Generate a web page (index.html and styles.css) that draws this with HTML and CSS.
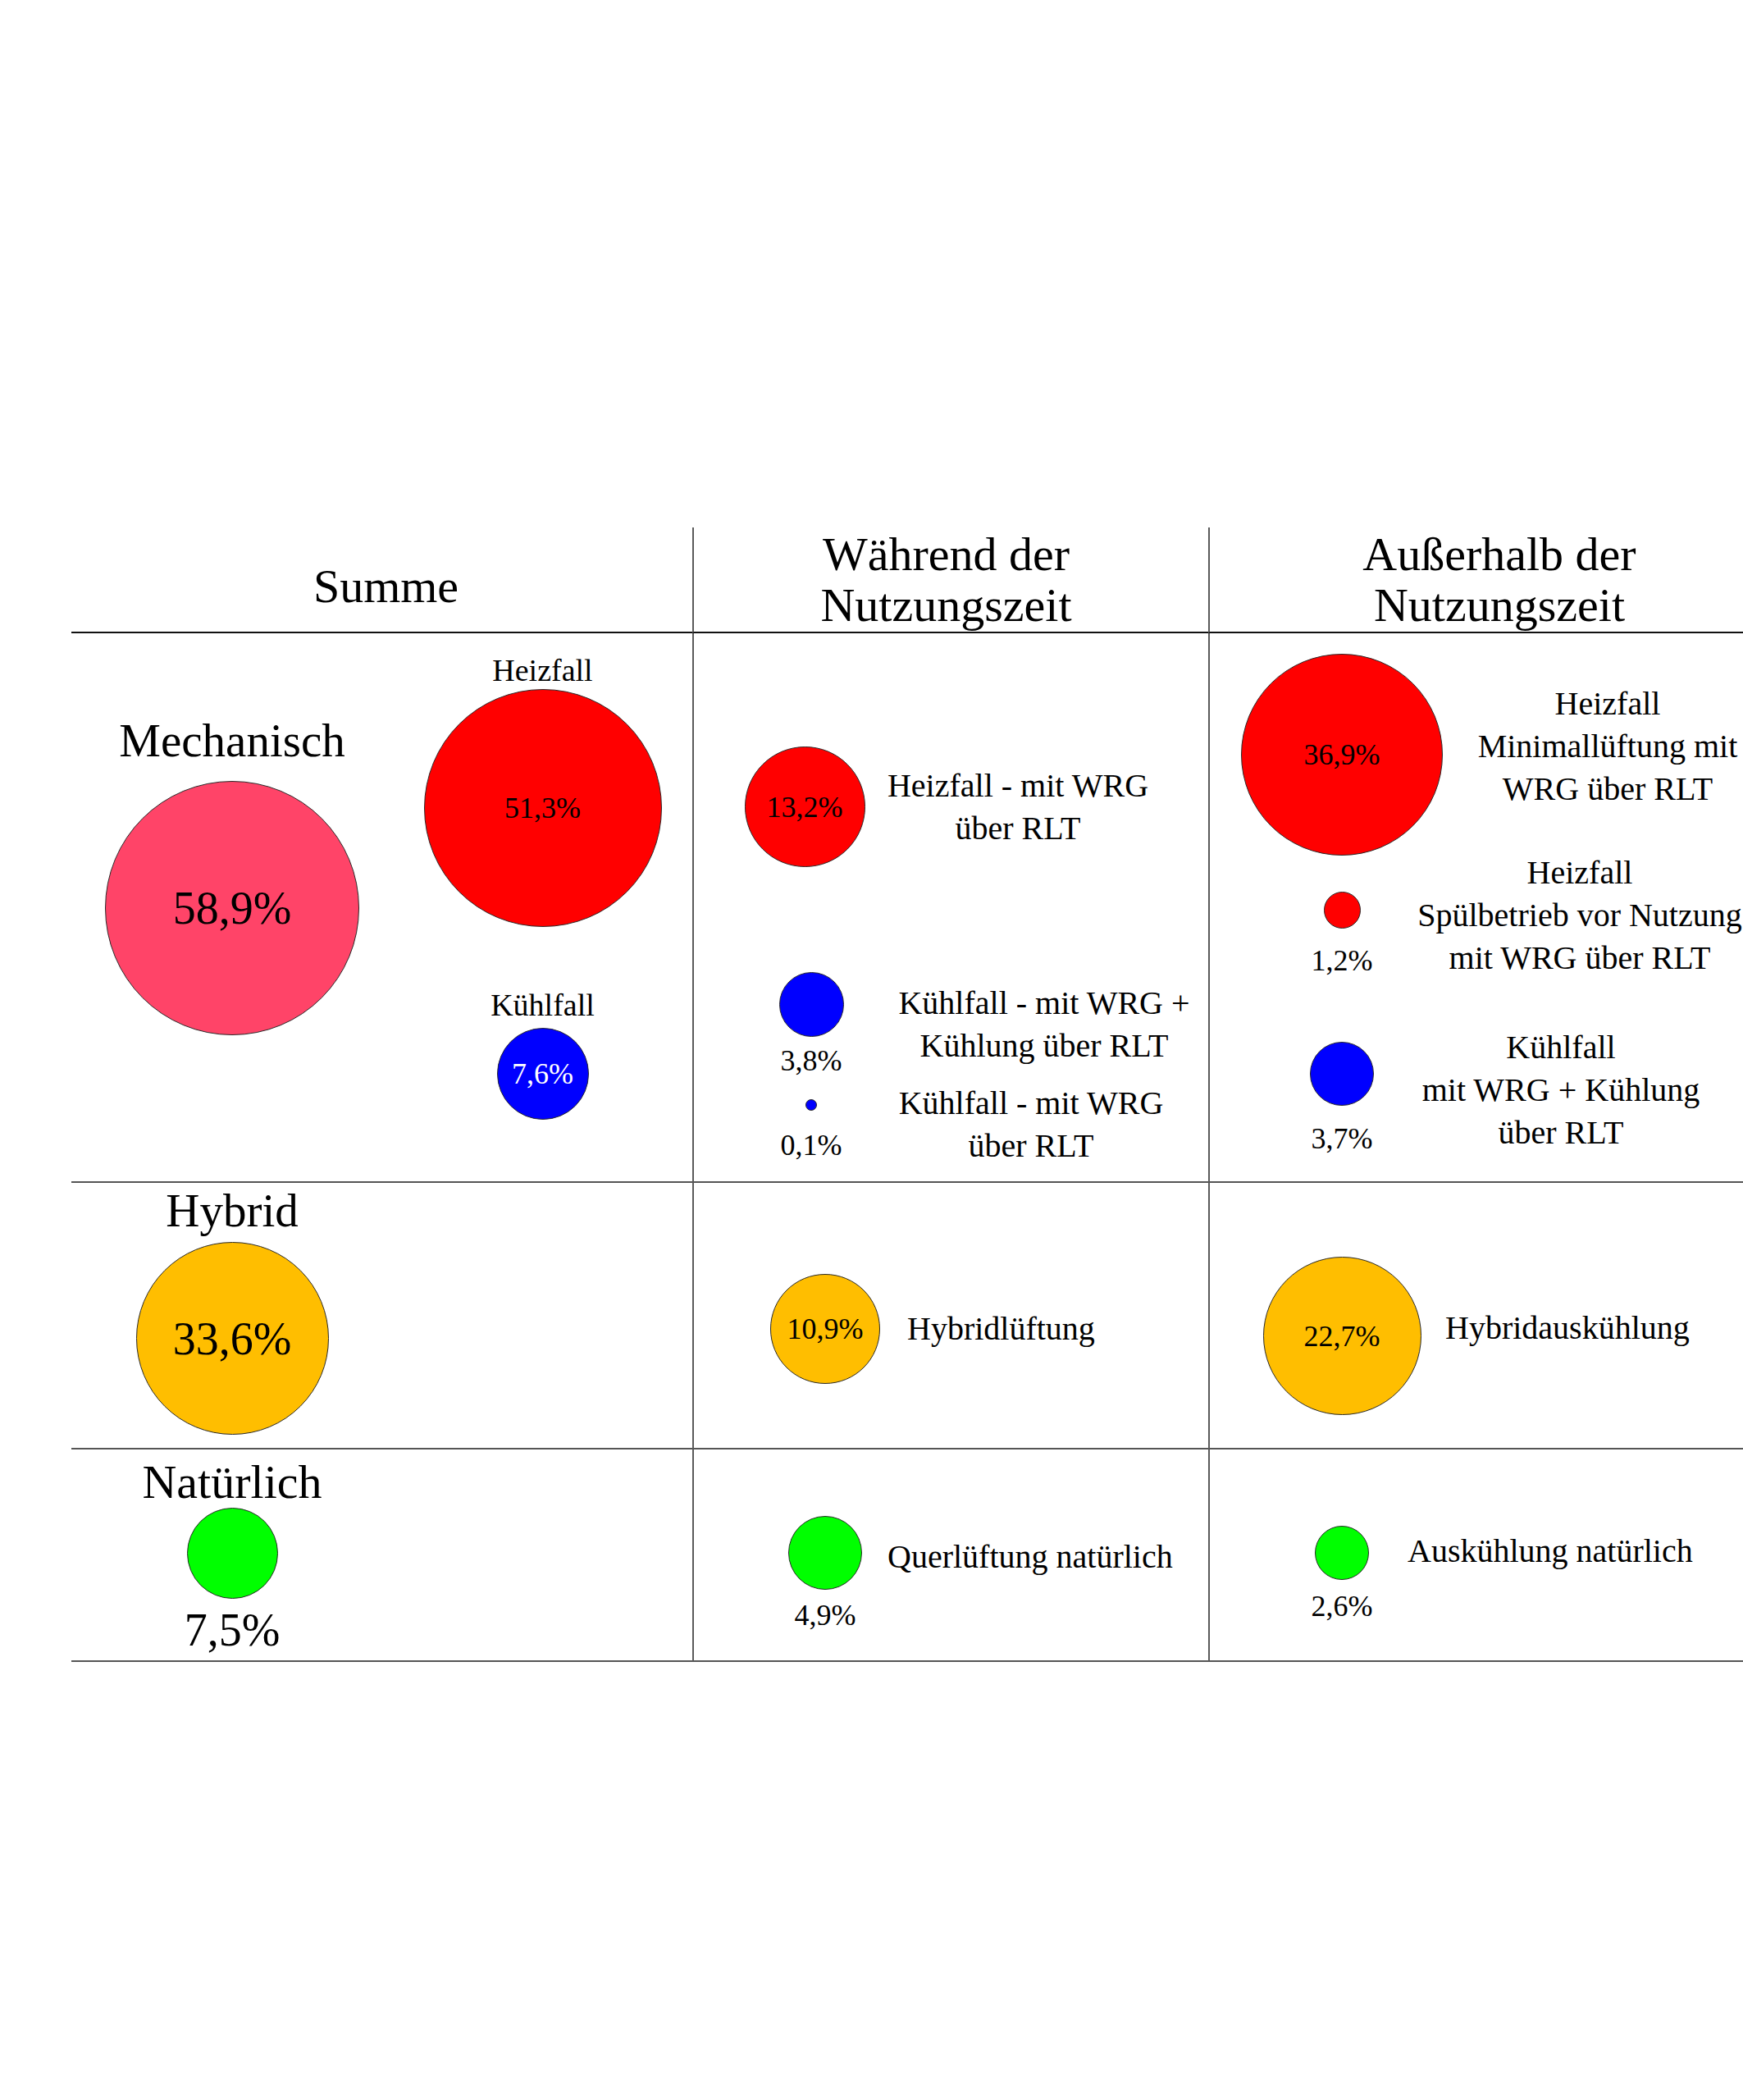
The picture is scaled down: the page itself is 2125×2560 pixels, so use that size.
FILE: index.html
```html
<!DOCTYPE html>
<html lang="de">
<head>
<meta charset="utf-8">
<title>Lüftungsarten – Anteile</title>
<link rel="stylesheet" href="styles.css">
</head>
<body>
<div class="chart">
  <div class="cell head sum"><div>Summe</div></div>
  <div class="cell head mid"><div>Während der<br>Nutzungszeit</div></div>
  <div class="cell head right"><div>Außerhalb der<br>Nutzungszeit</div></div>

  <!-- Mechanisch -->
  <div class="cell sum row-mech">
    <div class="group main mech">
      <div class="cat">Mechanisch</div>
      <div class="bubble pink b-mech" style="--d:310px"><span class="pct-lg">58,9%</span></div>
    </div>
    <div class="group sub">
      <div class="case">Heizfall</div>
      <div class="bubble red" style="--d:290px"><span class="pct">51,3%</span></div>
      <div class="case kuehl">Kühlfall</div>
      <div class="bubble blue b-kuehl" style="--d:112px"><span class="pct light">7,6%</span></div>
    </div>
  </div>
  <div class="cell mid list r1-mid">
    <div class="item m1a">
      <div class="mark"><div class="bubble red" style="--d:147px"><span class="pct">13,2%</span></div></div>
      <div class="desc">Heizfall - mit WRG<br>über RLT</div>
    </div>
    <div class="item m1b">
      <div class="mark">
        <div class="bubble blue" style="--d:79px"></div>
        <div class="label">3,8%</div>
      </div>
      <div class="desc">Kühlfall - mit WRG +<br>Kühlung über RLT</div>
    </div>
    <div class="item m1c">
      <div class="mark">
        <div class="bubble blue" style="--d:14px"></div>
        <div class="label">0,1%</div>
      </div>
      <div class="desc">Kühlfall - mit WRG<br>über RLT</div>
    </div>
  </div>
  <div class="cell right list r1-right">
    <div class="item a1a">
      <div class="mark"><div class="bubble red" style="--d:246px"><span class="pct">36,9%</span></div></div>
      <div class="desc">Heizfall<br>Minimallüftung mit<br>WRG über RLT</div>
    </div>
    <div class="item top a1b">
      <div class="mark">
        <div class="bubble red" style="--d:45px"></div>
        <div class="label">1,2%</div>
      </div>
      <div class="desc">Heizfall<br>Spülbetrieb vor Nutzung<br>mit WRG über RLT</div>
    </div>
    <div class="item top a1c">
      <div class="mark">
        <div class="bubble blue" style="--d:78px"></div>
        <div class="label">3,7%</div>
      </div>
      <div class="desc">Kühlfall<br>mit WRG + Kühlung<br>über RLT</div>
    </div>
  </div>

  <!-- Hybrid -->
  <div class="cell sum">
    <div class="group main hyb">
      <div class="cat">Hybrid</div>
      <div class="bubble amber b-hyb" style="--d:235px"><span class="pct-lg">33,6%</span></div>
    </div>
  </div>
  <div class="cell mid list r2-mid">
    <div class="item">
      <div class="mark"><div class="bubble amber" style="--d:134px"><span class="pct">10,9%</span></div></div>
      <div class="desc left">Hybridlüftung</div>
    </div>
  </div>
  <div class="cell right list r2-right">
    <div class="item">
      <div class="mark"><div class="bubble amber" style="--d:193px"><span class="pct">22,7%</span></div></div>
      <div class="desc left">Hybridauskühlung</div>
    </div>
  </div>

  <!-- Natürlich -->
  <div class="cell sum">
    <div class="group main nat">
      <div class="cat">Natürlich</div>
      <div class="bubble green b-nat" style="--d:111px"></div>
      <div class="cat-val">7,5%</div>
    </div>
  </div>
  <div class="cell mid list r3-mid">
    <div class="item top">
      <div class="mark">
        <div class="bubble green" style="--d:90px"></div>
        <div class="label">4,9%</div>
      </div>
      <div class="desc left">Querlüftung natürlich</div>
    </div>
  </div>
  <div class="cell right list r3-right">
    <div class="item top">
      <div class="mark">
        <div class="bubble green" style="--d:66px"></div>
        <div class="label">2,6%</div>
      </div>
      <div class="desc left">Auskühlung natürlich</div>
    </div>
  </div>
</div>
</body>
</html>
```

FILE: styles.css
```css
html, body {
  margin: 0;
  padding: 0;
  background: #ffffff;
}

body {
  font-family: "Liberation Serif", "Times New Roman", serif;
  color: #000000;
  overflow: hidden;
}

.chart {
  display: grid;
  grid-template-columns: 757px 629px 652px;
  grid-template-rows: 129px 670px 325px 259px;
  width: 2038px;
  margin: 643px 0 0 87px;
}

.cell {
  box-sizing: border-box;
  border-bottom: 2px solid #555555;
}

.cell.mid,
.cell.right {
  border-left: 2px solid #5a5a5a;
}

/* header */
.head {
  display: flex;
  align-items: center;
  justify-content: center;
  font-size: 58px;
  line-height: 62px;
  text-align: center;
  border-bottom-color: #111111;
}

.head.sum {
  padding-top: 16px;
  padding-left: 10px;
}

.head.mid {
  padding-right: 12px;
}

.head.right {
  padding-left: 56px;
}

/* Summe column */
.row-mech {
  display: flex;
}

.group {
  display: flex;
  flex-direction: column;
  align-items: center;
  flex: none;
}

.group.main {
  width: 392px;
}

.group.sub {
  width: 365px;
  padding-top: 22px;
}

.mech {
  padding-top: 98px;
}

.hyb {
  padding-top: 1px;
}

.nat {
  padding-top: 7px;
}

.cat {
  font-size: 57px;
  line-height: 66px;
  white-space: nowrap;
}

.nat .cat {
  font-size: 58px;
}

.cat-val {
  font-size: 56px;
  line-height: 60px;
  margin-top: 8px;
}

.case {
  font-size: 38px;
  line-height: 46px;
}

.case.kuehl {
  margin-top: 72px;
}

.b-mech {
  margin-top: 16px;
}

.b-kuehl {
  margin-top: 5px;
}

.b-hyb {
  margin-top: 5px;
}

.b-nat {
  margin-top: -2px;
}

/* bubbles */
.bubble {
  width: var(--d);
  height: var(--d);
  box-sizing: border-box;
  border-radius: 50%;
  border: 1px solid #2a2a2a;
  display: flex;
  align-items: center;
  justify-content: center;
  flex: none;
}

.pink { background: #ff4468; }
.red { background: #ff0000; }
.blue { background: #0000ff; }
.amber { background: #ffbe00; }
.green { background: #00ff00; }

.pct-lg {
  font-size: 56px;
  line-height: 1;
}

.pct {
  font-size: 36px;
  line-height: 1;
}

.pct.light {
  color: #ffffff;
}

/* list cells */
.list {
  display: flex;
  flex-direction: column;
}

.item {
  display: flex;
  align-items: center;
}

.item.top {
  align-items: flex-start;
}

.mark {
  display: flex;
  flex-direction: column;
  align-items: center;
  flex: none;
  width: 160px;
}

.label {
  font-size: 36px;
  line-height: 40px;
}

.desc {
  flex: none;
  font-size: 40px;
  line-height: 52px;
  text-align: center;
  white-space: nowrap;
}

.desc.left {
  text-align: left;
}

/* Während – Mechanisch */
.r1-mid {
  padding-top: 138px;
}

.m1a .mark { margin-left: 55px; }
.m1a .desc { width: 360px; }

.m1b { margin-top: 128px; }
.m1b .mark { margin-left: 63px; }
.m1b .label { margin-top: 9px; }
.m1b .desc { width: 380px; margin-left: 14px; }

.m1c { margin-top: 6px; }
.m1c .mark { margin-left: 63px; margin-top: 14px; }
.m1c .label { margin-top: 22px; }
.m1c .desc { width: 340px; margin-left: 18px; }

/* Außerhalb – Mechanisch */
.r1-right {
  padding-top: 25px;
}

.a1a .mark { width: 250px; margin-left: 36px; }
.a1a .desc { width: 340px; margin-left: 29px; margin-bottom: 20px; }

.a1b { margin-top: -5px; }
.a1b .mark { width: 120px; margin-left: 101px; margin-top: 49px; }
.a1b .label { margin-top: 19px; }
.a1b .desc { width: 420px; margin-left: 20px; }

.a1c { margin-top: 57px; }
.a1c .mark { width: 120px; margin-left: 101px; margin-top: 19px; }
.a1c .label { margin-top: 20px; }
.a1c .desc { width: 380px; margin-left: 17px; }

/* Hybrid */
.r2-mid {
  padding-top: 111px;
}

.r2-mid .mark { margin-left: 80px; }
.r2-mid .desc { margin-left: 20px; }

.r2-right {
  padding-top: 90px;
}

.r2-right .mark { width: 200px; margin-left: 61px; }
.r2-right .desc { margin-left: 26px; margin-bottom: 20px; }

/* Natürlich */
.r3-mid {
  padding-top: 81px;
}

.r3-mid .mark { width: 140px; margin-left: 90px; }
.r3-mid .label { margin-top: 11px; }
.r3-mid .desc { margin-left: 6px; margin-top: 24px; }

.r3-right {
  padding-top: 93px;
}

.r3-right .mark { width: 120px; margin-left: 101px; }
.r3-right .label { margin-top: 12px; }
.r3-right .desc { margin-left: 20px; margin-top: 5px; }
```
